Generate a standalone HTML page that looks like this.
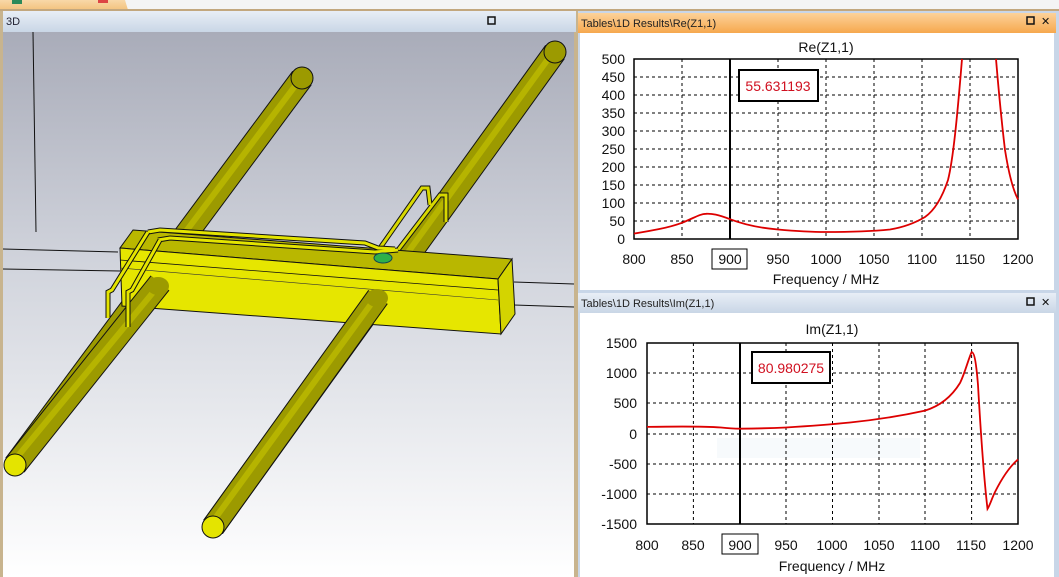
<!DOCTYPE html>
<html><head><meta charset="utf-8"><style>
html,body{margin:0;padding:0;width:1059px;height:577px;overflow:hidden;background:#dfe6ef;font-family:"Liberation Sans",sans-serif}
svg text{font-family:"Liberation Sans",sans-serif}
</style></head><body>
<svg width="1059" height="577" viewBox="0 0 1059 577" xmlns="http://www.w3.org/2000/svg">
<defs>
<linearGradient id="vp" x1="0" y1="0" x2="0" y2="1"><stop offset="0" stop-color="#a9acb9"/><stop offset="0.45" stop-color="#d3d6de"/><stop offset="1" stop-color="#ffffff"/></linearGradient>
<linearGradient id="tb" x1="0" y1="0" x2="0" y2="1"><stop offset="0" stop-color="#e8eef6"/><stop offset="1" stop-color="#c9d6e6"/></linearGradient>
<linearGradient id="ob" x1="0" y1="0" x2="0" y2="1"><stop offset="0" stop-color="#fcd29a"/><stop offset="1" stop-color="#f6a84e"/></linearGradient>
<linearGradient id="top" x1="0" y1="0" x2="0" y2="1"><stop offset="0" stop-color="#f8d8a8"/><stop offset="1" stop-color="#f3c27e"/></linearGradient>
</defs>
<rect x="0" y="0" width="1059" height="10" fill="url(#top)"/>
<path d="M125 0 L128 10 L1059 10 L1059 0 Z" fill="#f4f4f4"/>
<rect x="0" y="9" width="1059" height="2" fill="#c2a77e"/>
<rect x="12" y="0" width="10" height="4" fill="#2c8a5a"/>
<rect x="98" y="0" width="10" height="3" fill="#d44"/>
<rect x="0" y="11" width="578" height="566" fill="#c8b48e"/>
<rect x="3" y="11" width="573" height="21" fill="url(#tb)"/>
<text x="6" y="25" font-size="11" fill="#223">3D</text>
<rect x="488" y="17" width="7" height="7" fill="none" stroke="#111" stroke-width="1.5"/>
<rect x="3" y="32" width="571" height="545" fill="url(#vp)"/>
<path d="M33 32 L36 232" stroke="#111" stroke-width="1"/>
<path d="M3 249 L118 252" stroke="#111"/><path d="M3 269 L120 271" stroke="#111"/>
<path d="M514 282 L574 284" stroke="#111"/><path d="M514 305 L574 307" stroke="#111"/>
<g stroke-linecap="butt">
<path d="M302 78 L15 465" stroke="#111" stroke-width="24"/>
<path d="M302 78 L15 465" stroke="#9c9a00" stroke-width="22"/>
<path d="M298 82 L13 462" stroke="#b6b400" stroke-width="6"/>
<path d="M555 52 L213 527" stroke="#111" stroke-width="24"/>
<path d="M555 52 L213 527" stroke="#9c9a00" stroke-width="22"/>
<path d="M551 55 L211 524" stroke="#b6b400" stroke-width="6"/>
</g>
<circle cx="302" cy="78" r="11" fill="#9c9a00" stroke="#111"/>
<circle cx="555" cy="52" r="11" fill="#9c9a00" stroke="#111"/>
<path d="M380 248 L422 188 L428 188 L430 205 M398 250 L440 195 L446 195 L446 222" fill="none" stroke="#111" stroke-width="5"/>
<path d="M380 248 L422 188 L428 188 L430 205 M398 250 L440 195 L446 195 L446 222" fill="none" stroke="#d8d800" stroke-width="3"/>
<polygon points="133,230 512,259 498,279 120,248" fill="#b9b700" stroke="#111"/>
<polygon points="120,248 498,279 501,334 122,306" fill="#e6e600" stroke="#111"/>
<polygon points="498,279 512,259 515,314 501,334" fill="#d4d400" stroke="#111"/>
<path d="M120 260 L498 290" stroke="#111" stroke-width="0.8"/>
<path d="M120 268 L498 300" stroke="#333" stroke-width="0.6"/>
<path d="M148 232 L160 230 L365 243 L378 248 L395 249 M158 240 L170 238 L375 252 L398 250" fill="none" stroke="#111" stroke-width="5"/>
<path d="M148 232 L160 230 L365 243 L378 248 L395 249 M158 240 L170 238 L375 252 L398 250" fill="none" stroke="#e4e400" stroke-width="3"/>
<ellipse cx="383" cy="258" rx="9" ry="5" fill="#2fb04a" stroke="#145"/>
<path d="M160 283 L15 465" stroke="#111" stroke-width="24"/>
<path d="M160 283 L15 465" stroke="#9c9a00" stroke-width="22"/>
<path d="M155 290 L13 462" stroke="#b6b400" stroke-width="6"/>
<path d="M378 297 L213 527" stroke="#111" stroke-width="24"/>
<path d="M378 297 L213 527" stroke="#9c9a00" stroke-width="22"/>
<path d="M374 300 L211 524" stroke="#b6b400" stroke-width="6"/>
<ellipse cx="158" cy="286" rx="11" ry="9" fill="#9c9a00"/>
<ellipse cx="377" cy="298" rx="11" ry="9" fill="#9c9a00"/>
<circle cx="15" cy="465" r="11" fill="#e4e400" stroke="#111"/>
<circle cx="213" cy="527" r="11" fill="#e4e400" stroke="#111"/>
<path d="M148 232 L112 290 L108 292 L108 318 M160 240 L132 290 L128 292 L128 327" fill="none" stroke="#111" stroke-width="5"/>
<path d="M148 232 L112 290 L108 292 L108 318 M160 240 L132 290 L128 292 L128 327" fill="none" stroke="#e4e400" stroke-width="3"/>
<rect x="578" y="11" width="481" height="566" fill="#c8d6e8"/>
<rect x="578" y="13" width="478" height="20" fill="url(#ob)"/>
<text x="581" y="27" font-size="11" fill="#222">Tables\1D Results\Re(Z1,1)</text>
<rect x="1027" y="17" width="7" height="7" fill="none" stroke="#111" stroke-width="1.5"/>
<text x="1041" y="25" font-size="11" fill="#111">✕</text>
<rect x="580" y="33" width="474" height="257" fill="#fff"/>
<rect x="578" y="293" width="478" height="20" fill="url(#tb)"/>
<text x="581" y="307" font-size="11" fill="#222">Tables\1D Results\Im(Z1,1)</text>
<rect x="1027" y="298" width="7" height="7" fill="none" stroke="#111" stroke-width="1.5"/>
<text x="1041" y="306" font-size="11" fill="#111">✕</text>
<rect x="580" y="313" width="474" height="264" fill="#fff"/>

<text x="826" y="52" font-size="14" text-anchor="middle" fill="#111">Re(Z1,1)</text>
<g stroke="#000" stroke-dasharray="3,3" stroke-width="1">
<path d="M634 77H1018M634 95H1018M634 113H1018M634 131H1018M634 149H1018M634 167H1018M634 185H1018M634 203H1018M634 221H1018"/>
<path d="M682 59V239M778 59V239M826 59V239M874 59V239M922 59V239M970 59V239"/>
</g>
<rect x="634" y="59" width="384" height="180" fill="none" stroke="#000" stroke-width="1.5"/>
<g font-size="14" fill="#111" text-anchor="end">
<text x="625" y="64">500</text><text x="625" y="82">450</text><text x="625" y="100">400</text><text x="625" y="118">350</text><text x="625" y="136">300</text><text x="625" y="154">250</text><text x="625" y="172">200</text><text x="625" y="190">150</text><text x="625" y="208">100</text><text x="625" y="226">50</text><text x="625" y="244">0</text>
</g>
<g font-size="14" fill="#111" text-anchor="middle">
<text x="634" y="264">800</text><text x="682" y="264">850</text><text x="730" y="264">900</text><text x="778" y="264">950</text><text x="826" y="264">1000</text><text x="874" y="264">1050</text><text x="922" y="264">1100</text><text x="970" y="264">1150</text><text x="1018" y="264">1200</text>
<text x="826" y="284">Frequency / MHz</text>
</g>
<rect x="712" y="249" width="35" height="20" fill="none" stroke="#000"/>
<path d="M730 59V239" stroke="#000" stroke-width="2"/>
<path d="M634,233.6 C650,231 668,228 682,222.8 C694,218 700,213.8 706,213.8 C712,213.5 718,214.5 730,219.2 C745,225 760,228 778,229.5 C800,231.5 815,232 826,232 C850,232 870,231.5 890,229.5 C905,227 915,223 925,217 C935,210 942,198 948,180 C953,160 957,120 962,59" fill="none" stroke="#d00" stroke-width="1.8"/>
<path d="M996,59 C999,95 1002,125 1005,150 C1009,175 1013,190 1018,199.4" fill="none" stroke="#d00" stroke-width="1.8"/>
<rect x="739" y="70" width="79" height="31" fill="#fff" stroke="#000" stroke-width="2"/>
<text x="778" y="91" font-size="14" text-anchor="middle" fill="#d01020">55.631193</text>

<text x="832" y="334" font-size="14" text-anchor="middle" fill="#111">Im(Z1,1)</text>
<rect x="717" y="438" width="203" height="20" fill="#f7fafc"/>
<g stroke="#000" stroke-dasharray="3,3" stroke-width="1">
<path d="M647 373H1018M647 403H1018M647 434H1018M647 464H1018M647 494H1018"/>
<path d="M693.4 343V524M786 343V524M832.5 343V524M879 343V524M925 343V524M971.6 343V524"/>
</g>
<rect x="647" y="343" width="371" height="181" fill="none" stroke="#000" stroke-width="1.5"/>
<g font-size="14" fill="#111" text-anchor="end">
<text x="637" y="348">1500</text><text x="637" y="378">1000</text><text x="637" y="408">500</text><text x="637" y="439">0</text><text x="637" y="469">-500</text><text x="637" y="499">-1000</text><text x="637" y="529">-1500</text>
</g>
<g font-size="14" fill="#111" text-anchor="middle">
<text x="647" y="550">800</text><text x="693" y="550">850</text><text x="740" y="550">900</text><text x="786" y="550">950</text><text x="832" y="550">1000</text><text x="879" y="550">1050</text><text x="925" y="550">1100</text><text x="971" y="550">1150</text><text x="1018" y="550">1200</text>
<text x="832" y="571">Frequency / MHz</text>
</g>
<rect x="722" y="534" width="36" height="20" fill="none" stroke="#000"/>
<path d="M740 343V524" stroke="#000" stroke-width="2"/>
<path d="M647,426.9 C670,426.5 700,426 721,427.5 C730,428.5 735,428.7 740,428.7 C760,428.5 775,428 786,427.5 C810,426 830,424.5 850,422.5 C880,419.5 905,415 925,410.6 C940,406 952,396 960,383 C965,373 968,360 971.6,352.1 C974,352 976,360 978,385 C980,420 983,470 987.5,508.9 C990,505 992,498 995,492 C1000,482 1008,468 1018,459.4" fill="none" stroke="#d00" stroke-width="1.8"/>
<rect x="752" y="352" width="78" height="31" fill="#fff" stroke="#000" stroke-width="2"/>
<text x="791" y="373" font-size="14" text-anchor="middle" fill="#d01020">80.980275</text>
</svg>
</body></html>
